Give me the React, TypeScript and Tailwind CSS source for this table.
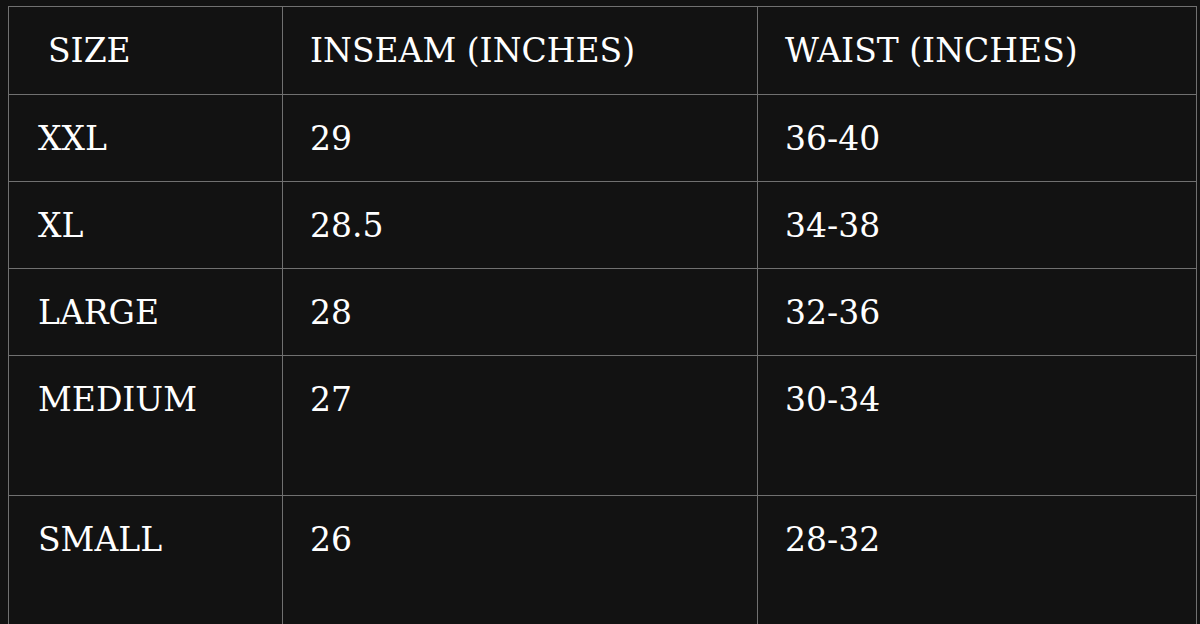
import React from "react";

const rows: { size: string; inseam: string; waist: string; h: string }[] = [
  { size: "XXL", inseam: "29", waist: "36-40", h: "h-[87px]" },
  { size: "XL", inseam: "28.5", waist: "34-38", h: "h-[87px]" },
  { size: "LARGE", inseam: "28", waist: "32-36", h: "h-[87px]" },
  { size: "MEDIUM", inseam: "27", waist: "30-34", h: "h-[140px]" },
  { size: "SMALL", inseam: "26", waist: "28-32", h: "h-[140px]" },
];

export default function App() {
  const base =
    "border border-[#707070] align-top pt-[24px] pr-4 text-left font-normal";
  const c1 = base + " pl-[29px]";
  const c2 = base + " pl-[27px]";
  return (
    <div
      className="w-[1200px] h-[624px] overflow-hidden bg-[#121212] text-white pt-[6px] pl-[8px]"
      style={{ fontFamily: '"DejaVu Serif", serif' }}
    >
      <table className="border-collapse table-fixed w-[1188px] text-[33px] leading-[40px]">
        <colgroup>
          <col className="w-[274px]" />
          <col className="w-[475px]" />
          <col className="w-[439px]" />
        </colgroup>
        <thead>
          <tr className="h-[88px]">
            <th className={c1}>
              <span className="pl-[10px]">SIZE</span>
            </th>
            <th className={c2}>INSEAM (INCHES)</th>
            <th className={c2}>WAIST (INCHES)</th>
          </tr>
        </thead>
        <tbody>
          {rows.map((r) => (
            <tr key={r.size} className={r.h}>
              <td className={c1}>{r.size}</td>
              <td className={c2}>{r.inseam}</td>
              <td className={c2}>{r.waist}</td>
            </tr>
          ))}
        </tbody>
      </table>
    </div>
  );
}
